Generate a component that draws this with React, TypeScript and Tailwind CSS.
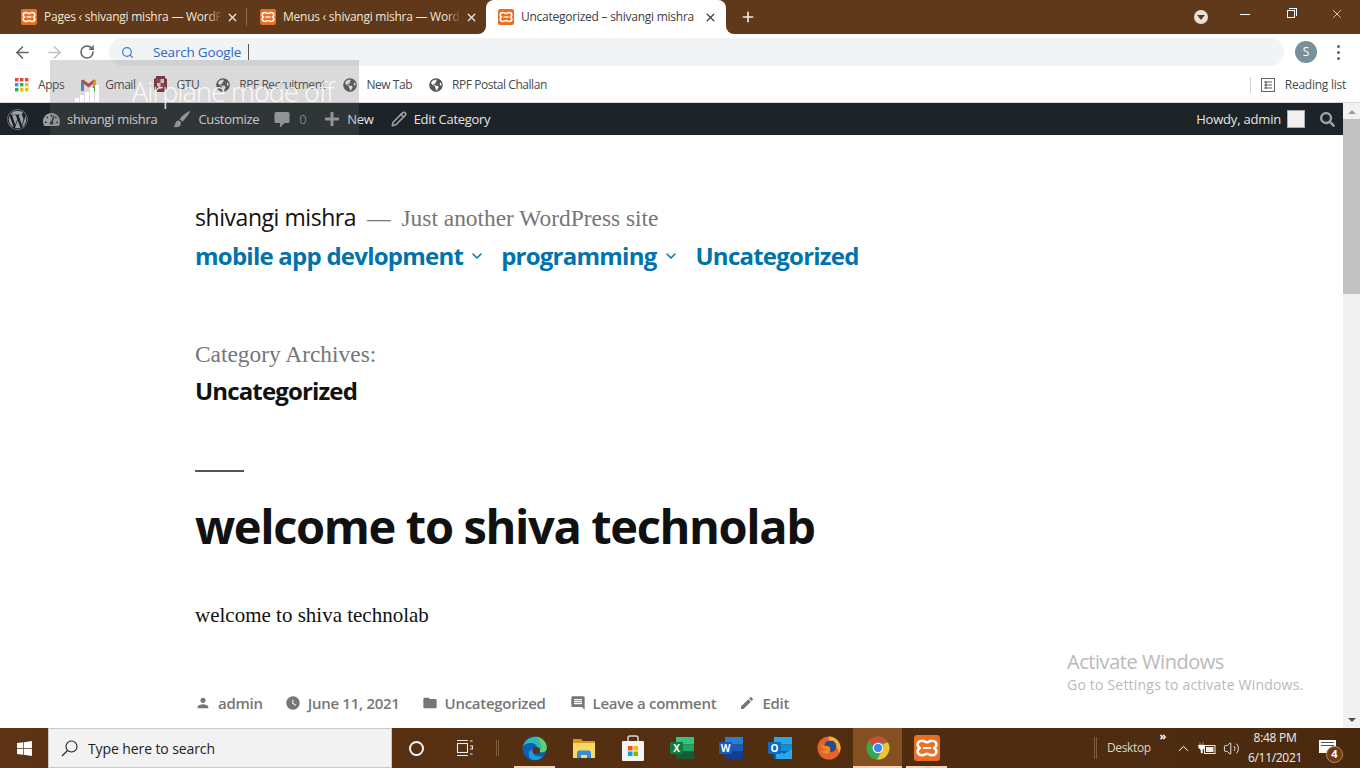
import React from "react";
import { ArrowLeft, ArrowRight, RotateCw, Search, Plus, X, ChevronDown, ChevronUp, Volume2, Pencil } from "lucide-react";
import { FaWordpress, FaTachometerAlt, FaGlobeAmericas, FaWindows, FaSearch } from "react-icons/fa";
import { MdPerson, MdWatchLater, MdFolder, MdComment, MdEdit } from "react-icons/md";

const ui = "font-['Open_Sans',sans-serif]";

const XamppIcon = ({ size = 16 }: { size?: number }) => (
  <svg width={size} height={size} viewBox="0 0 16 16" className="shrink-0">
    <rect width="16" height="16" rx="2" fill="#ea6f23" />
    <path d="M5 3.500c1.500 0 2 1 3 1s1.500-1 3-1c1.800 0 2.800 1.300 2.800 2.500 0 1-.8 1.500-1.300 2 .5.500 1.300 1 1.300 2 0 1.200-1 2.500-2.800 2.500-1.500 0-2-1-3-1s-1.500 1-3 1c-1.800 0-2.800-1.300-2.800-2.500 0-1 .8-1.500 1.300-2-.5-.5-1.300-1-1.300-2 0-1.200 1-2.500 2.800-2.500z" fill="none" stroke="#fff" strokeWidth="1.600" />
    <path d="M5.500 8h5" stroke="#fff" strokeWidth="1.300" />
  </svg>
);

const Tab = ({ title, active, divider }: { title: string; active?: boolean; divider?: boolean }) => (
  <div className={`relative flex h-[34px] shrink-0 items-center ${active ? "w-[240px] rounded-t-[8px] bg-white pl-[12px] pr-[9px] text-[#3c4043]" : "w-[239px] pl-[13px] pr-[8px] text-[#f0e6dc]"}`}>
    {active && (
      <>
        <div className="absolute -left-[8px] bottom-0 h-[8px] w-[8px] bg-white">
          <div className="h-full w-full rounded-br-[8px] bg-[#5f3919]" />
        </div>
        <div className="absolute -right-[8px] bottom-0 h-[8px] w-[8px] bg-white">
          <div className="h-full w-full rounded-bl-[8px] bg-[#5f3919]" />
        </div>
      </>
    )}
    <XamppIcon />
    <div className="relative ml-[7px] flex-1 overflow-hidden whitespace-nowrap text-[12px] tracking-[-0.25px]">
      {title}
      {!active && <div className="absolute bottom-0 right-0 top-0 w-[14px] bg-gradient-to-r from-transparent to-[#5f3919]" />}
    </div>
    <X size={13} strokeWidth={2.4} className="ml-[4px] shrink-0" />
    {divider && <div className="absolute right-0 top-[8px] h-[18px] w-px bg-[#8a6a4e]" />}
  </div>
);

const Bookmark = ({ icon, label, gap = "gap-[9px]" }: { icon: React.ReactNode; label: string; gap?: string }) => (
  <div className={`flex items-center ${gap} whitespace-nowrap text-[12px] tracking-[-0.45px] text-[#46494d]`}>
    {icon}
    <span>{label}</span>
  </div>
);

const AppsGrid = () => (
  <svg width="14" height="14" viewBox="0 0 14 14">
    {[0, 5, 10].map((y, r) =>
      [0, 5, 10].map((x, c) => (
        <rect key={`${r}${c}`} x={x} y={y} width="3.4" height="3.4" fill={[["#ea4335", "#ea4335", "#ea4335"], ["#4285f4", "#34a853", "#fbbc05"], ["#34a853", "#fbbc05", "#fbbc05"]][r][c]} />
      ))
    )}
  </svg>
);

const GmailIcon = () => (
  <svg width="15" height="12" viewBox="0 0 15 12">
    <path d="M0 1.500V12h3V5l4.500 3.500L12 5v7h3V1.500L12.800.4 7.500 4.400 2.200.4z" fill="#d8443a" />
    <path d="M12 5v7h3V1.500L12.800.4z" fill="#f2b705" />
    <path d="M0 1.500V12h3V5z" fill="#4a86e8" />
    <path d="M12 12h3V8l-3-1z" fill="#34a853" />
  </svg>
);

const GtuIcon = () => (
  <svg width="15" height="17" viewBox="0 0 15 17">
    <path d="M3 0h9v2l2 1v10l-3 3H4l-3-3V3l2-1z" fill="#7c2a36" />
    <path d="M4 3h7v7l-3.500 3L4 10z" fill="#ddd" />
    <path d="M4 3h3.500v4H4zM7.500 7H11v3l-3.500 3z" fill="#a8323f" />
  </svg>
);

const Globe = () => <FaGlobeAmericas size={14} className="text-[#55585c]" />;

const AdminItem = ({ icon, label, muted, gap = "gap-[7px]" }: { icon: React.ReactNode; label: string; muted?: boolean; gap?: string }) => (
  <div className={`flex items-center ${gap} whitespace-nowrap text-[13px] font-[500] tracking-[-0.3px] ${muted ? "text-[#7f8488]" : "text-[#e4e5e6]"}`}>
    <span className="text-[#9ca1a7]">{icon}</span>
    <span className="relative top-px">{label}</span>
  </div>
);

const BrushIcon = () => (
  <svg width="18" height="18" viewBox="0 0 18 18" className="block" fill="currentColor">
    <path d="M17.500.5C14 2 9 5.500 6.500 9.500c1.200.4 2.200 1.200 2.700 2.400C12.500 8.800 16 4.500 17.500.5z" />
    <path d="M5.500 10.500C3.500 10.500 2.500 12 2.300 13.500 2.100 15 1.500 16 .5 16.500c2 1 5.500 1 7-1.300.9-1.500.2-4.700-2-4.700z" />
  </svg>
);

const BubbleIcon = () => (
  <svg width="16" height="17" viewBox="0 0 16 17" className="block" fill="currentColor">
    <path d="M2 1h12a1.500 1.500 0 0 1 1.500 1.500v8A1.500 1.500 0 0 1 14 12h-3.500L6 16.500V12H2a1.500 1.500 0 0 1-1.500-1.500v-8A1.500 1.500 0 0 1 2 1z" />
  </svg>
);

const CrossIcon = () => (
  <svg width="16" height="16" viewBox="0 0 16 16" className="block" fill="currentColor">
    <path d="M6.500 1h3v5.500H15v3H9.500V15h-3V9.500H1v-3h5.500z" />
  </svg>
);

const Meta = ({ icon, label }: { icon: React.ReactNode; label: string }) => (
  <div className="flex items-center gap-[7px] whitespace-nowrap text-[15px] font-[600] tracking-[-0.28px] text-[#767676]">
    {icon}
    <span>{label}</span>
  </div>
);

const NavChevron = () => <ChevronDown size={16} strokeWidth={2.2} className="text-[#0073aa]" />;

const EdgeIcon = () => (
  <svg width="25" height="25" viewBox="0 0 25 25">
    <circle cx="12.500" cy="12.500" r="12" fill="#0c5fb0" />
    <path d="M.8 11C2.500 3.500 9.500 0 15 .8c6 .8 9.700 6 9.700 11 0 3-2 4.500-5 4.500-3 0-5-1-5-2.500 0-2.500 1-3-1-5C11 6.500 4 6 .8 11z" fill="#2fb8b0" />
    <path d="M14 1c5 .5 10.700 4.500 10.700 10.800 0 3-2 4.500-5 4.500-3 0-5-1-5-2.500 2 .5 5 .5 5-2 0-5-3-9-5.700-10.800z" fill="#5fd06a" />
    <circle cx="14.500" cy="14.500" r="3.500" fill="#5a3113" />
    <path d="M10 13c0 6 5 9 11 7-3 4-8 5-12 3-3-2-3-8 1-10z" fill="#1b9de2" />
  </svg>
);

const FolderIcon = () => (
  <svg width="22" height="20" viewBox="0 0 22 20">
    <path d="M0 1h8l2 2h12v4H0z" fill="#d09a1e" />
    <path d="M0 5h22v15H0z" fill="#fbd763" />
    <path d="M4 20v-5c0-1.500 1-2.500 2.500-2.500h9c1.500 0 2.500 1 2.500 2.500v5h-4v-3H8v3z" fill="#2f8fd8" />
  </svg>
);

const StoreIcon = () => (
  <svg width="24" height="26" viewBox="0 0 24 26">
    <path d="M7 8V3c0-1.500 1-2 2-2h6c1 0 2 .5 2 2v5" fill="none" stroke="#d8d8d8" strokeWidth="1.500" />
    <rect x="1" y="6" width="22" height="20" rx="1" fill="#f4f4f4" />
    <rect x="7" y="11" width="4.500" height="4.500" fill="#f25022" />
    <rect x="12.500" y="11" width="4.500" height="4.500" fill="#ffb900" />
    <rect x="7" y="16.500" width="4.500" height="4.500" fill="#00a4ef" />
    <rect x="12.500" y="16.500" width="4.500" height="4.500" fill="#7fba00" />
  </svg>
);

const OfficeIcon = ({ dark, mid, light, letter, tile, mail }: { dark: string; mid: string; light: string; letter: string; tile: string; mail?: boolean }) => (
  <svg width="24" height="22" viewBox="0 0 24 22">
    <rect x="6" y="0" width="18" height="7.500" fill={light} />
    <rect x="6" y="7.500" width="18" height="7" fill={mid} />
    <rect x="6" y="14.500" width="18" height="7.500" fill={dark} />
    {mail && <path d="M8 22V12l8 5 8-5v10z" fill="#28a8ea" />}
    <rect x="0" y="5" width="13" height="12" rx="1" fill={tile} />
    <text x="6.500" y="14.500" textAnchor="middle" fontSize="10" fontWeight="700" fill="#fff" fontFamily="'Open Sans',sans-serif">{letter}</text>
  </svg>
);

const FirefoxIcon = () => (
  <svg width="24" height="24" viewBox="0 0 26 26">
    <circle cx="13" cy="13" r="12.500" fill="#e5622a" />
    <path d="M13 .5c6.500 0 12.500 5.500 12.500 12.500 0 2-.6 4-1.500 5.500-1-5-4-9-8-10-2-.5-4-3-3-8z" fill="#f6b02e" />
    <circle cx="14.500" cy="11" r="6.500" fill="#2a4796" />
    <path d="M4 8c2 3.500 6 1.500 9 3.500 2.500 2 2 6.500-1 7.500-3 1-6.500-1-7.500-3.500 2 1 4 1 5.500-1-2.500 0-5-1.500-6-6.500z" fill="#f08a1d" />
    <path d="M12 4c2-1.500 5-1.500 6.500 0-2 0-3 .5-3.500 1.500z" fill="#f8c53c" />
  </svg>
);

const ChromeIcon = () => (
  <svg width="24" height="24" viewBox="0 0 26 26">
    <circle cx="13" cy="13" r="12.500" fill="#34a853" />
    <path d="M13 .5A12.500 12.500 0 0 1 23.800 7H13a6 6 0 0 0-5.500 3.500L3 5A12.500 12.500 0 0 1 13 .5z" fill="#d9453a" />
    <path d="M23.800 7A12.500 12.500 0 0 1 12 25.500l5-9A6 6 0 0 0 18 9z" fill="#f4c430" />
    <circle cx="13" cy="13" r="5.800" fill="#fff" />
    <circle cx="13" cy="13" r="4.500" fill="#4285f4" />
  </svg>
);

const TaskIcon = ({ children, active, running }: { children: React.ReactNode; active?: boolean; running?: boolean }) => (
  <div className={`relative flex h-[40px] w-[49px] items-center justify-center ${active ? "bg-[#85501f]" : ""}`}>
    {children}
    {running && <div className={`absolute bottom-0 h-[2px] bg-[#f8d2b4] ${active ? "left-0 right-0" : "left-[4px] right-[4px]"}`} />}
  </div>
);

export default function App() {
  return (
    <div className={`relative flex h-screen w-full flex-col overflow-hidden bg-white ${ui}`}>
      {/* tab strip */}
      <div className="flex h-[34px] shrink-0 items-center bg-[#5f3919]">
        <div className="w-[8px]" />
        <Tab title="Pages ‹ shivangi mishra — WordP" divider />
        <Tab title="Menus ‹ shivangi mishra — Word" />
        <Tab title="Uncategorized – shivangi mishra" active />
        <Plus size={16} strokeWidth={2.4} className="ml-[14px] text-[#f3ece5]" />
        <div className="flex-1" />
        <div className="mr-[14px] flex h-[14px] w-[14px] items-center justify-center rounded-full bg-[#e6e1dc]">
          <div className="h-0 w-0 border-x-[4px] border-t-[5px] border-x-transparent border-t-[#5f3919]" />
        </div>
        <div className="flex h-[28px] w-[46px] items-center justify-center self-start">
          <div className="h-px w-[10px] bg-white" />
        </div>
        <div className="flex h-[28px] w-[46px] items-center justify-center self-start">
          <div className="relative h-[8px] w-[8px] border border-white">
            <div className="absolute -right-[3px] -top-[3px] h-[8px] w-[8px] border-r border-t border-white" />
          </div>
        </div>
        <div className="flex h-[28px] w-[46px] items-center justify-center self-start">
          <X size={14} strokeWidth={1.2} className="text-white" />
        </div>
      </div>

      {/* toolbar */}
      <div className="flex h-[34px] shrink-0 items-center bg-white pt-[2px]">
        <ArrowLeft size={19} strokeWidth={2} className="ml-[13px] text-[#5f6368]" />
        <ArrowRight size={19} strokeWidth={2} className="ml-[13px] text-[#bdc1c6]" />
        <RotateCw size={16} strokeWidth={2.3} className="ml-[15px] text-[#5f6368]" />
        <div className="ml-[14px] flex h-[28px] flex-1 items-center rounded-full bg-[#f1f3f4]">
          <Search size={13} strokeWidth={2.2} className="ml-[12px] text-[#3b78d8]" />
          <span className="ml-[19px] text-[13.500px] tracking-[-0.2px] text-[#3367c0]">Search Google</span>
          <div className="ml-[7px] h-[16px] w-px bg-[#555]" />
        </div>
        <div className="ml-[11px] flex h-[22px] w-[22px] items-center justify-center rounded-full bg-[#78909c] text-[12px] text-white">S</div>
        <div className="ml-[20px] mr-[20px] flex flex-col gap-[3px]">
          <div className="h-[3px] w-[3px] rounded-full bg-[#5f6368]" />
          <div className="h-[3px] w-[3px] rounded-full bg-[#5f6368]" />
          <div className="h-[3px] w-[3px] rounded-full bg-[#5f6368]" />
        </div>
      </div>

      {/* bookmarks */}
      <div className="flex h-[35px] shrink-0 items-center border-b border-[#d9d9d9] bg-white pb-[1px] pl-[15px]">
        <Bookmark icon={<AppsGrid />} label="Apps" />
        <div className="w-[17px]" />
        <Bookmark icon={<GmailIcon />} label="Gmail" />
        <div className="w-[17px]" />
        <Bookmark icon={<GtuIcon />} label="GTU" />
        <div className="w-[17px]" />
        <Bookmark icon={<Globe />} label="RPF Recruitment" />
        <div className="w-[18px]" />
        <Bookmark icon={<Globe />} label="New Tab" />
        <div className="w-[17px]" />
        <Bookmark icon={<Globe />} label="RPF Postal Challan" />
        <div className="flex-1" />
        <div className="h-[16px] w-px bg-[#d0d0d0]" />
        <svg width="14" height="14" viewBox="0 0 14 14" className="ml-[10px]">
          <rect x=".5" y=".5" width="13" height="13" fill="none" stroke="#5f6368" />
          <path d="M3 4h8M3 7h8M3 10h8M5 3v8" stroke="#5f6368" strokeWidth="1.200" />
        </svg>
        <span className="ml-[10px] mr-[14px] text-[12px] tracking-[-0.25px] text-[#46494d]">Reading list</span>
      </div>

      <div className="flex min-h-0 flex-1">
        <div className="flex min-w-0 flex-1 flex-col">
          {/* wp admin bar */}
          <div className="flex h-[32px] shrink-0 items-center bg-[#1d2327] pl-[7px] pr-[8px]">
            <FaWordpress size={21} className="text-[#9ca1a7]" />
            <div className="w-[15px]" />
            <AdminItem icon={<FaTachometerAlt size={17} className="block" />} label="shivangi mishra" />
            <div className="w-[16px]" />
            <AdminItem icon={<BrushIcon />} label="Customize" />
            <div className="w-[15px]" />
            <AdminItem icon={<BubbleIcon />} label="0" muted gap="gap-[9px]" />
            <div className="w-[18px]" />
            <AdminItem icon={<CrossIcon />} label="New" />
            <div className="w-[17px]" />
            <AdminItem icon={<Pencil size={16} strokeWidth={2.4} className="block" />} label="Edit Category" />
            <div className="flex-1" />
            <span className="relative top-px whitespace-nowrap text-[13px] tracking-[-0.2px] text-[#e6e6e6]">Howdy, admin</span>
            <div className="ml-[6px] h-[18px] w-[18px] border border-[#aaa] bg-[#f0f0f0]" />
            <FaSearch size={15} className="ml-[15px] text-[#9ca1a7]" />
          </div>

          {/* page */}
          <div className="flex min-h-0 flex-1 flex-col overflow-hidden pl-[195px]">
            <div className="mt-[65px] flex h-[32px] items-baseline whitespace-nowrap">
              <span className="text-[23px] tracking-[-0.45px] text-[#111]">shivangi mishra</span>
              <span className="ml-[11px] font-['Liberation_Serif',serif] text-[23.400px] text-[#767676]">—</span>
              <span className="ml-[11px] font-['Liberation_Serif',serif] text-[23.400px] text-[#767676]">Just another WordPress site</span>
            </div>
            <div className="mt-[7px] flex h-[34px] items-center whitespace-nowrap text-[24px] font-bold tracking-[-0.76px] text-[#0073aa]">
              <span>mobile app devlopment</span>
              <span className="ml-[6px]"><NavChevron /></span>
              <span className="ml-[16px]">programming</span>
              <span className="ml-[7px]"><NavChevron /></span>
              <span className="ml-[16px]">Uncategorized</span>
            </div>
            <div className="mt-[65px] font-['Liberation_Serif',serif] text-[23.400px] leading-[32px] text-[#767676]">Category Archives:</div>
            <div className="mt-[2px] text-[24px] font-bold leading-[38px] tracking-[-0.85px] text-[#111]">Uncategorized</div>
            <div className="mt-[60px] h-[2px] w-[49px] bg-[#555]" />
            <h1 className="mt-[28px] whitespace-nowrap text-[47px] font-bold leading-[52px] tracking-[-1.36px] text-[#111]">welcome to shiva technolab</h1>
            <p className="mt-[48px] font-['Liberation_Serif',serif] text-[21px] leading-[30px] text-[#111]">welcome to shiva technolab</p>
            <div className="mt-[62px] flex items-center">
              <Meta icon={<MdPerson size={16} />} label="admin" />
              <div className="w-[22px]" />
              <Meta icon={<MdWatchLater size={16} />} label="June 11, 2021" />
              <div className="w-[22px]" />
              <Meta icon={<MdFolder size={16} />} label="Uncategorized" />
              <div className="w-[24px]" />
              <Meta icon={<MdComment size={16} />} label="Leave a comment" />
              <div className="w-[23px]" />
              <Meta icon={<MdEdit size={16} />} label="Edit" />
            </div>
          </div>
        </div>

        {/* scrollbar */}
        <div className="flex w-[17px] shrink-0 flex-col items-center bg-[#f1f1f1]">
          <div className="mt-[7px] h-0 w-0 border-x-[4px] border-b-[4px] border-x-transparent border-b-[#a0a0a0]" />
          <div className="mt-[5px] h-[175px] w-full bg-[#c1c1c1]" />
          <div className="flex-1" />
          <div className="mb-[6px] h-0 w-0 border-x-[4px] border-t-[4px] border-x-transparent border-t-[#505050]" />
        </div>
      </div>

      {/* taskbar */}
      <div className="flex h-[40px] shrink-0 items-center bg-gradient-to-r from-[#5c3313] to-[#4a2a0e]">
        <div className="flex h-[40px] w-[48px] items-center justify-center">
          <FaWindows size={17} className="text-white" />
        </div>
        <div className="flex h-[40px] w-[344px] items-center border border-[#c8c8c8] bg-[#f2f2f2] pl-[12px]">
          <svg width="17" height="17" viewBox="0 0 17 17" fill="none" stroke="#222" strokeWidth="1.100">
            <circle cx="10.500" cy="6.500" r="5.500" />
            <path d="M6.500 10.500 1 16" />
          </svg>
          <span className="ml-[10px] text-[14px] tracking-[-0.1px] text-[#222]">Type here to search</span>
        </div>
        <div className="flex h-[40px] w-[48px] items-center justify-center">
          <div className="h-[15px] w-[15px] rounded-full border-[2px] border-[#f5f5f5]" />
        </div>
        <div className="flex h-[40px] w-[48px] items-center justify-center">
          <svg width="17" height="16" viewBox="0 0 17 16" fill="none" stroke="#eee" strokeWidth="1.100">
            <path d="M1 .5h11M1 15.500h11" />
            <rect x="1.500" y="3.500" width="10" height="9" />
            <path d="M14 1h2.500M14 6h2.500v3H14M14 14h2.500" />
          </svg>
        </div>
        <div className="ml-[8px] mr-[11px] h-[16px] w-[3px] border-x border-[#7d5a3c]" />
        <TaskIcon running><EdgeIcon /></TaskIcon>
        <TaskIcon><FolderIcon /></TaskIcon>
        <TaskIcon><StoreIcon /></TaskIcon>
        <TaskIcon><OfficeIcon dark="#185c37" mid="#21a366" light="#33c481" tile="#107c41" letter="X" /></TaskIcon>
        <TaskIcon><OfficeIcon dark="#103f91" mid="#185abd" light="#2b7cd3" tile="#185abd" letter="W" /></TaskIcon>
        <TaskIcon><OfficeIcon dark="#0364b8" mid="#0f8fd8" light="#28a8ea" tile="#0f6cbd" letter="O" mail /></TaskIcon>
        <TaskIcon><FirefoxIcon /></TaskIcon>
        <TaskIcon active running><ChromeIcon /></TaskIcon>
        <TaskIcon running><XamppIcon size={26} /></TaskIcon>
        <div className="flex-1" />
        <div className="h-[22px] w-[3px] border-x border-[#7d5a3c]" />
        <div className="relative ml-[10px] flex h-[40px] w-[59px] items-center text-[12px] tracking-[-0.35px] text-[#dcd5cd]">
          Desktop
          <span className="absolute right-[0px] top-[2px] text-[11px] font-bold leading-none text-white">»</span>
        </div>
        <ChevronUp size={17} strokeWidth={1.4} className="ml-[9px] text-white" />
        <svg width="18" height="13" viewBox="0 0 18 13" className="ml-[6px]">
          <rect x="6.500" y="3.500" width="10.500" height="8" fill="none" stroke="#eee" />
          <rect x="8" y="5" width="7.500" height="5" fill="#eee" />
          <path d="M2 0v3M5 0v3M.5 3h6v2.500L4.500 8v3H3V8L.5 5.500z" fill="#fff" stroke="#fff" strokeWidth=".4" />
        </svg>
        <Volume2 size={17} strokeWidth={1.2} className="ml-[7px] text-white" />
        <div className="ml-[2px] flex w-[66px] flex-col items-center text-[12px] leading-[20px] tracking-[-0.3px] text-[#eee]">
          <span>8:48 PM</span>
          <span>6/11/2021</span>
        </div>
        <div className="relative ml-[11px] mr-[23px] h-[40px] w-[18px]">
          <div className="absolute left-0 top-[12px] flex h-[13px] w-[17px] flex-col gap-[2px] bg-white px-[2px] pt-[2px]">
            <div className="h-px bg-[#555]" />
            <div className="h-px bg-[#555]" />
          </div>
          <div className="absolute left-[7px] top-[18px] flex h-[17px] w-[17px] items-center justify-center rounded-full border border-[#b98a5e] bg-[#6b3d17] text-[11px] font-bold text-white">4</div>
        </div>
      </div>

      {/* airplane mode flyout left over the capture */}
      <div className="pointer-events-none absolute left-[50px] top-[60px] h-[75px] w-[309px] bg-[#6b6b6b]/25">
        <div className="absolute left-[25px] top-[25px] flex items-end gap-px">
          <div className="h-[4px] w-[4px] bg-white" />
          <div className="h-[7px] w-[4px] bg-white" />
          <div className="h-[10px] w-[4px] bg-white" />
          <div className="h-[14px] w-[4px] bg-white" />
          <div className="h-[17px] w-[4px] bg-white" />
        </div>
        <span className="absolute left-[82px] top-[12px] whitespace-nowrap text-[27px] font-light tracking-[-0.9px] text-white/85">Airplane mode off</span>
      </div>

      {/* activation watermark */}
      <div className="pointer-events-none absolute left-[1067px] top-[649px] text-[#b9b9b9]">
        <div className="text-[20px] leading-[26px] tracking-[-0.45px]">Activate Windows</div>
        <div className="text-[14px] leading-[20px] tracking-[0.2px]">Go to Settings to activate Windows.</div>
      </div>
    </div>
  );
}
